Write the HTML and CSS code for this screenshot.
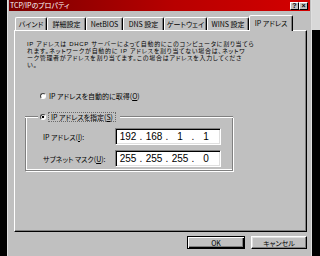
FILE: index.html
```html
<!DOCTYPE html>
<html lang="ja">
<head>
    <meta charset="UTF-8">
    <title>TCP/IPのプロパティ</title>
    <link rel="stylesheet" href="styles.css">
</head>
<body>
    <div class="desk">
        <div class="window">
            <div class="titlebar">
                <span class="title">TCP/IPのプロパティ</span>
                <span class="tbtn">?</span>
                <span class="tbtn">×</span>
            </div>

            <div class="tabs">
                <div class="tab">バインド</div>
                <div class="tab">詳細設定</div>
                <div class="tab">NetBIOS</div>
                <div class="tab">DNS 設定</div>
                <div class="tab">ゲートウェイ</div>
                <div class="tab">WINS 設定</div>
                <div class="tab active">IP アドレス</div>
            </div>

            <div class="panel">
                <p class="note">IP アドレスは DHCP サーバーによって自動的にこのコンピュータに割り当てら<br>れます。ネットワークが自動的に IP アドレスを割り当てない場合は、ネットワ<br>ーク管理者がアドレスを割り当てます。この場合はアドレスを入力してくださ<br>い。</p>

                <div class="option">
                    <span class="radio"></span>
                    <span>IP アドレスを自動的に取得(<u>O</u>)</span>
                </div>

                <div class="group">
                    <div class="group-head">
                        <span class="radio on"></span>
                        <span class="focus">IP アドレスを指定(<u>S</u>)</span>
                    </div>
                    <div class="group-body">
                        <div class="field">
                            <span class="field-label">IP アドレス(<u>I</u>):</span>
                            <div class="ipbox">
                                <span class="octet">192</span><span class="dot">.</span>
                                <span class="octet">168</span><span class="dot">.</span>
                                <span class="octet">1</span><span class="dot">.</span>
                                <span class="octet">1</span>
                            </div>
                        </div>
                        <div class="field">
                            <span class="field-label">サブネット マスク(<u>U</u>):</span>
                            <div class="ipbox">
                                <span class="octet">255</span><span class="dot">.</span>
                                <span class="octet">255</span><span class="dot">.</span>
                                <span class="octet">255</span><span class="dot">.</span>
                                <span class="octet">0</span>
                            </div>
                        </div>
                    </div>
                </div>
            </div>

            <div class="buttons">
                <button class="btn default">OK</button>
                <button class="btn">キャンセル</button>
            </div>
        </div>
        <div class="side"></div>
    </div>
</body>
</html>
```

FILE: styles.css
```css
body {
    margin: 0;
    background: #000;
    color: #000;
    font-family: "Noto Sans CJK JP", sans-serif;
    font-size: 7px;
    font-feature-settings: "palt";
}

.desk {
    display: flex;
    height: 256px;
    overflow: hidden;
}

.window {
    margin-left: 7px;
    width: 303px;
    border-left: 1px solid #dfdfdf;
    border-right: 1px solid #dfdfdf;
    background: #c0c0c0;
    display: flex;
    flex-direction: column;
}

.side {
    flex: 1;
    background: linear-gradient(#d8d8d8 30px, #000 30px);
}

/* title bar */
.titlebar {
    height: 11px;
    margin: 0 1px;
    padding: 0 2px 0 1px;
    background: linear-gradient(90deg, #7a0000, #b80000 55%, #d40000);
    color: #fff;
    display: flex;
    align-items: center;
}

.title {
    flex: 1;
    white-space: nowrap;
    line-height: 11px;
}

.tbtn {
    width: 9px;
    height: 8px;
    box-sizing: border-box;
    background: #c0c0c0;
    border: 1px solid;
    border-color: #fff #000 #000 #fff;
    color: #000;
    font: bold 7px/6px "Liberation Sans", sans-serif;
    text-align: center;
}

/* tabs */
.tabs {
    display: flex;
    align-items: flex-end;
    height: 15px;
    margin: 4px 0 0 7px;
}

.tab {
    height: 13px;
    box-sizing: border-box;
    border: 1px solid;
    border-bottom: none;
    border-color: #fff #000 transparent #fff;
    border-radius: 2px 2px 0 0;
    box-shadow: inset -1px 0 #808080;
    display: flex;
    align-items: center;
    justify-content: center;
    white-space: nowrap;
}

.tab:nth-child(1) { width: 32px; }
.tab:nth-child(2) { width: 39px; }
.tab:nth-child(3) { width: 37px; }
.tab:nth-child(4) { width: 41px; }
.tab:nth-child(5) { width: 43px; }
.tab:nth-child(6) { width: 42px; }
.tab:nth-child(7) { width: 44px; }

.tab.active {
    height: 16px;
    margin-bottom: -1px;
    padding-bottom: 2px;
    background: #c0c0c0;
    position: relative;
    z-index: 1;
}

/* panel */
.panel {
    box-sizing: border-box;
    height: 202px;
    margin: 0 4px 0 6px;
    padding: 10px 0 0 10px;
    border: 1px solid;
    border-color: #fff #000 #000 #fff;
    box-shadow: inset -1px -1px #808080;
}

.note {
    margin: 0 0 0 2px;
    font-family: "Liberation Sans", "Noto Sans CJK JP", sans-serif;
    font-size: 6px;
    letter-spacing: 0.7px;
    line-height: 7px;
    white-space: nowrap;
}

.option {
    display: flex;
    align-items: center;
    gap: 3px;
    height: 8px;
    margin: 23px 0 0 15px;
    white-space: nowrap;
}

.radio {
    width: 6px;
    height: 6px;
    box-sizing: border-box;
    border-radius: 50%;
    border: 1px solid;
    border-color: #404040 #fff #fff #404040;
    background: #fff;
}

.radio.on {
    background: radial-gradient(circle, #000 0 1.3px, #fff 1.6px);
}

/* group box: etched line, with the radio sitting in its top edge */
.group {
    width: 208px;
    margin-top: 12px;
}

.group-head {
    display: flex;
    align-items: center;
    gap: 2px;
    height: 10px;
    white-space: nowrap;
}

.group-head::before,
.group-head::after {
    content: "";
    height: 2px;
    box-sizing: border-box;
    border-top: 1px solid #808080;
    border-bottom: 1px solid #fff;
}

.group-head::before {
    width: 13px;
}

.group-head::after {
    flex: 1;
    margin-left: 2px;
}

.focus {
    height: 10px;
    box-sizing: border-box;
    padding: 0 2px;
    border: 1px dotted #6a6a6a;
    line-height: 8px;
}

.group-body {
    margin-top: -5px;
    padding: 11px 0 3px 17px;
    border: 1px solid #808080;
    border-top: none;
    box-shadow: 1px 1px 0 #fff, inset 1px -1px 0 #fff;
}

.field {
    display: flex;
    align-items: center;
}

.field + .field {
    margin-top: 5px;
}

.field-label {
    width: 72px;
    white-space: nowrap;
}

.ipbox {
    width: 106px;
    height: 17px;
    box-sizing: border-box;
    padding-left: 1px;
    background: #fff;
    border: 1px solid;
    border-color: #808080 #fff #fff #808080;
    box-shadow: inset 1px 1px #000, inset -1px -1px #dfdfdf;
    display: flex;
    align-items: center;
    font: 10px "Liberation Sans", sans-serif;
}

.octet {
    width: 22px;
    text-align: center;
}

.dot {
    width: 4px;
    text-align: center;
}

/* dialog buttons */
.buttons {
    display: flex;
    justify-content: flex-end;
    gap: 6px;
    padding: 4px 4px 0 0;
}

.btn {
    width: 56px;
    height: 13px;
    padding: 0;
    font: inherit;
    color: #000;
    background: #c0c0c0;
    border: 1px solid;
    border-color: #fff #000 #000 #fff;
    box-shadow: inset -1px -1px #808080, inset 1px 1px #dfdfdf;
}

.btn.default {
    width: 58px;
    border-color: #000;
    box-shadow: inset 1px 1px #fff, inset -1px -1px #000, inset -2px -2px #808080;
}
```
